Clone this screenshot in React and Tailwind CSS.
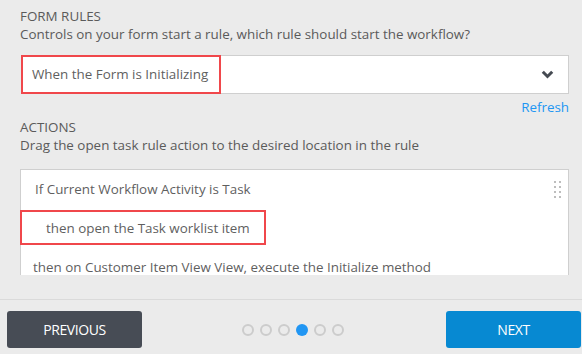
const rules = [
    { text: 'If Current Workflow Activity is Task', pad: 'pl-[14px]' },
    { text: 'then open the Task worklist item', pad: 'pl-[25px]', marked: true },
    { text: 'then on Customer Item View View, execute the Initialize method', pad: 'pl-[12px]' },
];

const DragHandle = () => (
    <div className="absolute right-[7px] top-[11px] grid grid-cols-2 gap-x-[3px] gap-y-[3px]">
        {Array.from({ length: 8 }).map((_, i) => (
            <span key={i} className="block w-[2px] h-[2px] bg-[#bdbdbd]" />
        ))}
    </div>
);

export default function App() {
    const steps = [0, 1, 2, 3, 4, 5];
    const active = 3;

    return (
        <div
            className="w-[582px] h-[354px] bg-[#ebebeb] text-[#5a5a5a] text-[13.4px] flex flex-col overflow-hidden"
            style={{ fontFamily: '"Open Sans", "Liberation Sans", sans-serif' }}
        >
            {/* Content */}
            <div className="h-[275px] overflow-hidden pl-5 pr-[13px] pt-[7px]">
                <p className="leading-[18px]">FORM RULES</p>
                <p className="leading-[18px]">Controls on your form start a rule, which rule should start the workflow?</p>

                {/* Select */}
                <div className="relative mt-[12px] ml-px h-[39px] bg-white border border-[#cfcfcf] flex items-center justify-between pl-[10px] pr-[14px]">
                    <span className="text-[#5f5f5f]">When the Form is Initializing</span>
                    <svg width="13" height="9" viewBox="0 0 13 9" className="text-[#454a52]">
                        <polyline points="1.8,1.8 6.5,6.5 11.2,1.8" fill="none" stroke="currentColor" strokeWidth="3" />
                    </svg>
                    <div className="absolute left-[-1px] top-[-1px] w-[200px] h-[39px] border-[2.5px] border-[#f0474b]" />
                </div>
                <div className="flex justify-end mt-[4px]">
                    <span className="leading-[18px] text-[#2196f3]">Refresh</span>
                </div>

                <p className="leading-[18px] mt-[2px]">ACTIONS</p>
                <p className="leading-[18px]">Drag the open task rule action to the desired location in the rule</p>

                {/* Rules list */}
                <div className="relative mt-[15px] bg-white border border-[#cfcfcf] pb-4">
                    <DragHandle />
                    {rules.map((r) => (
                        <div key={r.text} className={`relative h-[39px] flex items-center ${r.pad}`}>
                            <span className="text-[#5f5f5f]">{r.text}</span>
                            {r.marked && (
                                <div className="absolute left-[-1px] top-[1px] w-[246px] h-[35px] border-[2.5px] border-[#f0474b]" />
                            )}
                        </div>
                    ))}
                </div>
            </div>

            {/* Footer */}
            <div className="mt-[24px] border-t border-[#dadada] flex items-center justify-between pl-[7px] pr-px pt-[11px]">
                <button className="w-[135px] h-[37px] rounded-[3px] bg-[#474c55] text-white text-[14px] font-medium tracking-[-0.4px]">
                    PREVIOUS
                </button>
                <div className="flex items-center gap-[6px] mr-[2px]">
                    {steps.map((s) => (
                        <span
                            key={s}
                            className={`block w-[12px] h-[12px] rounded-full ${s === active ? 'bg-[#2196f3]' : 'border-2 border-[#cccccc]'}`}
                        />
                    ))}
                </div>
                <button className="w-[135px] h-[37px] rounded-[3px] bg-[#0789d2] text-white text-[14px] font-medium tracking-[-0.4px]">
                    NEXT
                </button>
            </div>
        </div>
    );
}
